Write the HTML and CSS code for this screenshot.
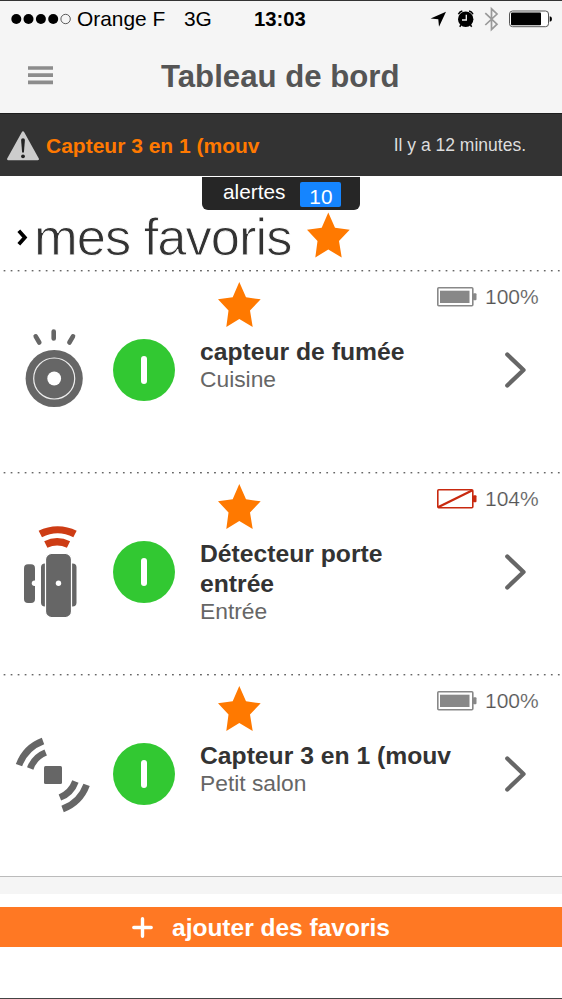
FILE: index.html
```html
<!DOCTYPE html>
<html lang="fr">
<head>
<meta charset="utf-8">
<title>Tableau de bord</title>
<link rel="stylesheet" href="styles.css">
</head>
<body>
<svg class="defs" width="0" height="0" aria-hidden="true">
  <symbol id="star" viewBox="0 0 43 45"><path fill="#ff7900" d="M21.3 0 28 15.3 42.7 17.3 32 28.5 34.7 45 21.3 37 8.3 45 10.5 28.5 0 17.3 14.7 15.3Z"/></symbol>
  <symbol id="chevron" viewBox="0 0 22 36"><path d="M2.300 2.500 18.500 18 2.300 33.500" fill="none" stroke="#666" stroke-width="4.300" stroke-linecap="round" stroke-linejoin="round"/></symbol>
  <symbol id="battery" viewBox="0 0 40 20"><rect x=".8" y=".8" width="35" height="18" rx="1" fill="#fff" stroke="#888" stroke-width="1.600"/><rect x="3" y="3.700" width="29.500" height="12.300" fill="#888"/><rect x="36" y="6.300" width="3.500" height="7" rx="1" fill="#888"/></symbol>
  <symbol id="battery-off" viewBox="0 0 40 20"><path d="M1 18.300 35 1.500" stroke="#c8290f" stroke-width="2.300"/><rect x=".8" y=".8" width="35" height="18" rx="1" fill="none" stroke="#c8290f" stroke-width="1.600"/><rect x="36" y="6.300" width="3.500" height="7" rx="1" fill="#c8290f"/></symbol>
</svg>
<div class="app">
  <header class="top">
    <div class="status">
      <svg class="signal" width="62" height="12" viewBox="0 0 62 12"><circle cx="5.300" cy="6" r="5"/><circle cx="17.500" cy="6" r="5"/><circle cx="29.900" cy="6" r="5"/><circle cx="42.200" cy="6" r="5"/><circle cx="54.600" cy="6" r="4.700" fill="none" stroke="#333" stroke-width=".8"/></svg>
      <span class="carrier">Orange F</span>
      <span class="network">3G</span>
      <span class="time">13:03</span>
      <svg class="status-icons" width="124" height="26" viewBox="430 6 124 26">
        <path d="M446 11.700 439 26.700 438.300 19.200 430.600 18.400Z"/>
        <circle cx="465.700" cy="19.300" r="7.700"/>
        <path d="M458.400 14.200Q459.500 11.700 462.300 11M473 14.200Q471.900 11.700 469.100 11" fill="none" stroke="#000" stroke-width="1.500"/>
        <path d="M461 25 459.700 26.700M470.400 25 471.700 26.700" stroke="#000" stroke-width="1.500"/>
        <path d="M466.300 14.700V20H462" fill="none" stroke="#f5f5f5" stroke-width="1.300"/>
        <path d="M485.300 13.200 497 24.200 491.500 29.500V8.800L497 14 485.300 25" fill="none" stroke="#999" stroke-width="1.700"/>
        <rect x="509.500" y="11" width="39" height="15.700" rx="3" fill="#fff" stroke="#555" stroke-width="1"/>
        <rect x="511" y="12.500" width="30" height="12.700" rx="1"/>
        <path d="M549.700 16.200Q552 16.500 552 19T549.700 21.800Z"/>
      </svg>
    </div>
    <div class="nav">
      <svg class="menu" width="25" height="19" viewBox="0 0 25 19"><path d="M0 2H25M0 9.200H25M0 16.300H25" stroke="#8c8c8c" stroke-width="3.700"/></svg>
      <h1 class="page-title">Tableau de bord</h1>
    </div>
  </header>

  <section class="alert">
    <svg class="warning" width="32" height="30" viewBox="0 0 32 30"><path d="M16 1.500 30.700 28H1.300Z" fill="#ccc" stroke="#ccc" stroke-width="2.500" stroke-linejoin="round"/><path d="M14.100 9Q14.100 7.300 16 7.300T17.900 9L16.900 21.500H15.100Z" fill="#222"/><circle cx="16" cy="25.300" r="1.900" fill="#222"/></svg>
    <strong class="alert-name">Capteur 3 en 1 (mouv</strong>
    <span class="alert-time">Il y a 12 minutes.</span>
    <div class="tab"><span>alertes</span><span class="count">10</span></div>
  </section>

  <section class="heading">
    <svg class="caret" width="12" height="17" viewBox="0 0 12 17"><path d="M1.800 1.800 7.800 8.500 1.800 15.200" fill="none" stroke="#000" stroke-width="3.800"/></svg>
    <h2 class="section-title">mes favoris</h2>
    <svg class="star-large" width="43" height="46"><use href="#star"/></svg>
  </section>

  <main class="list">
    <article class="device">
      <svg class="device-icon" width="100" height="100" viewBox="0 50 100 100"><path d="M53.700 61.500V68.500M35.700 66.300 39.300 72.500M73 66.300 69.400 72.500" stroke="#666" stroke-width="4.600" stroke-linecap="round"/><circle cx="54.200" cy="108.500" r="28.600" fill="#666"/><circle cx="54.200" cy="108.500" r="20.500" fill="none" stroke="#eee" stroke-width="1.200"/><circle cx="54.200" cy="108.500" r="6.900" fill="#fff"/></svg>
      <span class="power"></span>
      <div class="body">
        <div class="meta"><svg class="star" width="43" height="45"><use href="#star"/></svg><svg class="battery" width="40" height="20"><use href="#battery"/></svg><span class="level">100%</span></div>
        <div class="info"><div class="text"><h3 class="name">capteur de fumée</h3><p class="room">Cuisine</p></div><svg class="go" width="22" height="36"><use href="#chevron"/></svg></div>
      </div>
    </article>
    <article class="device">
      <svg class="device-icon" width="100" height="100" viewBox="0 50 100 100"><path d="M40.300 62A38 38 0 0 1 75 62M45.800 72.500A26 26 0 0 1 68.500 72.500" fill="none" stroke="#cd3c14" stroke-width="7.300"/><rect x="41" y="91.500" width="35.500" height="43" rx="4" fill="#666"/><rect x="45.500" y="81.500" width="26" height="64" rx="6" fill="#666" stroke="#fff" stroke-width="1.200"/><rect x="24" y="92.300" width="11" height="38.700" rx="4" fill="#666"/><path d="M35.500 108.500H34.500A2.700 2.700 0 0 0 34.500 113.900H35.500Z" fill="#fff"/><circle cx="58.500" cy="111.300" r="2.700" fill="#fff"/></svg>
      <span class="power"></span>
      <div class="body">
        <div class="meta"><svg class="star" width="43" height="45"><use href="#star"/></svg><svg class="battery" width="40" height="20"><use href="#battery-off"/></svg><span class="level">104%</span></div>
        <div class="info"><div class="text"><h3 class="name">Détecteur porte entrée</h3><p class="room">Entrée</p></div><svg class="go" width="22" height="36"><use href="#chevron"/></svg></div>
      </div>
    </article>
    <article class="device">
      <svg class="device-icon" width="100" height="100" viewBox="0 50 100 100"><rect x="44" y="92" width="18" height="18" rx="1.500" fill="#666"/><g id="waves" fill="none" stroke="#666" stroke-width="6.700"><path d="M19 91.200A41 41 0 0 1 43 67M30.200 94.500A27 27 0 0 1 45.700 78.500"/></g><use href="#waves" transform="rotate(180 52.800 101)"/></svg>
      <span class="power"></span>
      <div class="body">
        <div class="meta"><svg class="star" width="43" height="45"><use href="#star"/></svg><svg class="battery" width="40" height="20"><use href="#battery"/></svg><span class="level">100%</span></div>
        <div class="info"><div class="text"><h3 class="name">Capteur 3 en 1 (mouv</h3><p class="room">Petit salon</p></div><svg class="go" width="22" height="36"><use href="#chevron"/></svg></div>
      </div>
    </article>
  </main>

  <div class="separator"></div>
  <button class="add"><svg width="21" height="21" viewBox="0 0 21 21"><path d="M10.500 1.800V19.200M1.800 10.500H19.200" stroke="#fff" stroke-width="3.400" stroke-linecap="round"/></svg><span>ajouter des favoris</span></button>
</div>
</body>
</html>
```
FILE: styles.css
```css
* { box-sizing: border-box; }
body {
  margin: 0;
  background: #fff;
  font-family: "Liberation Sans", Arial, sans-serif;
  color: #333;
}
h1, h2, h3, p { margin: 0; }
svg { display: block; flex: none; }
.defs { position: absolute; }
.app {
  width: 562px;
  height: 999px;
  overflow: hidden;
  border-top: 1px solid #333;
  border-bottom: 1px solid #444;
}
.top { height: 112px; background: #f5f5f5; }
.status {
  display: flex;
  align-items: center;
  height: 36px;
  padding-left: 11px;
  font-size: 20.9px;
  line-height: 36px;
  color: #000;
  white-space: nowrap;
}
.carrier { width: 107px; margin-left: 4px; }
.network { width: 70px; }
.time { width: 176px; font-size: 20.3px; font-weight: bold; }
.nav { display: flex; align-items: center; height: 76px; padding-left: 28px; }
.page-title {
  margin-left: 108px;
  font-size: 31.2px;
  line-height: 36px;
  color: #555;
  white-space: nowrap;
  padding-top: 4px;
}
.menu { margin-top: 1px; }
.alert {
  position: relative;
  display: flex;
  align-items: center;
  height: 63px;
  padding: 1px 36px 0 7px;
  background: #333;
  border-top: 1px solid #1e1e1e;
  white-space: nowrap;
}
.alert-name { margin-left: 7px; font-size: 21px; color: #ff7900; }
.alert-time { margin-left: auto; font-size: 17.5px; color: #ddd; }
.tab {
  position: absolute;
  top: 63px;
  left: 202px;
  display: flex;
  width: 158px;
  height: 33px;
  padding-left: 21px;
  border-radius: 0 0 6px 6px;
  background: #262626;
  color: #fff;
  font-size: 20.8px;
  line-height: 29px;
}
.count {
  width: 41px;
  height: 25px;
  margin: 5px 0 0 15px;
  border-radius: 2px;
  background: #1585ff;
  text-align: center;
  line-height: 30px;
}
.heading { display: flex; height: 94px; padding-left: 17px; }
.caret { margin-top: 53px; }
.section-title {
  width: 271px;
  margin-left: 5px;
  padding-top: 31px;
  font-size: 52.5px;
  font-weight: normal;
  line-height: 60px;
  letter-spacing: -1px;
  white-space: nowrap;
  color: #333;
  -webkit-text-stroke: 0.9px #fff;
}
.star-large { margin: 36px 0 0 2px; }
.device {
  display: grid;
  grid-template-columns: 113px 87px 362px;
  height: 202px;
  background: radial-gradient(circle, #666 0.8px, transparent 1.3px) 1px -1px / 7.017px 3px repeat-x;
}
.device-icon { margin-top: 50px; }
.power {
  display: flex;
  align-items: center;
  justify-content: center;
  width: 62px;
  height: 62px;
  margin-top: 69px;
  border-radius: 50%;
  background: #32c832;
}
.device + .device .power { margin-top: 68.5px; }
.power::before { content: ""; width: 6px; height: 28px; border-radius: 3px; background: #fff; }
.meta { display: flex; height: 67px; }
.star { margin: 12px 0 0 18px; }
.battery { margin: 16.5px 0 0 176px; }
.level {
  margin: 14px 0 0 8px;
  font-size: 21px;
  line-height: 25px;
  color: #555;
  -webkit-text-stroke: 0.2px #fff;
}
.info { display: flex; }
.text { width: 254px; margin-right: 51px; }
.name { font-size: 24.7px; line-height: 30px; color: #333; }
.room { font-size: 22.8px; line-height: 25px; color: #666; }
.go { margin-top: 14.5px; }
.separator {
  height: 18px;
  border-top: 1px solid #bbb;
  background: #f5f5f5;
}
.add {
  display: flex;
  align-items: center;
  gap: 19px;
  width: 100%;
  height: 40px;
  margin-top: 13px;
  padding: 1px 0 0 132px;
  border: 0;
  background: #ff7823;
  color: #fff;
  font: bold 24.5px "Liberation Sans", Arial, sans-serif;
  white-space: nowrap;
}
```
